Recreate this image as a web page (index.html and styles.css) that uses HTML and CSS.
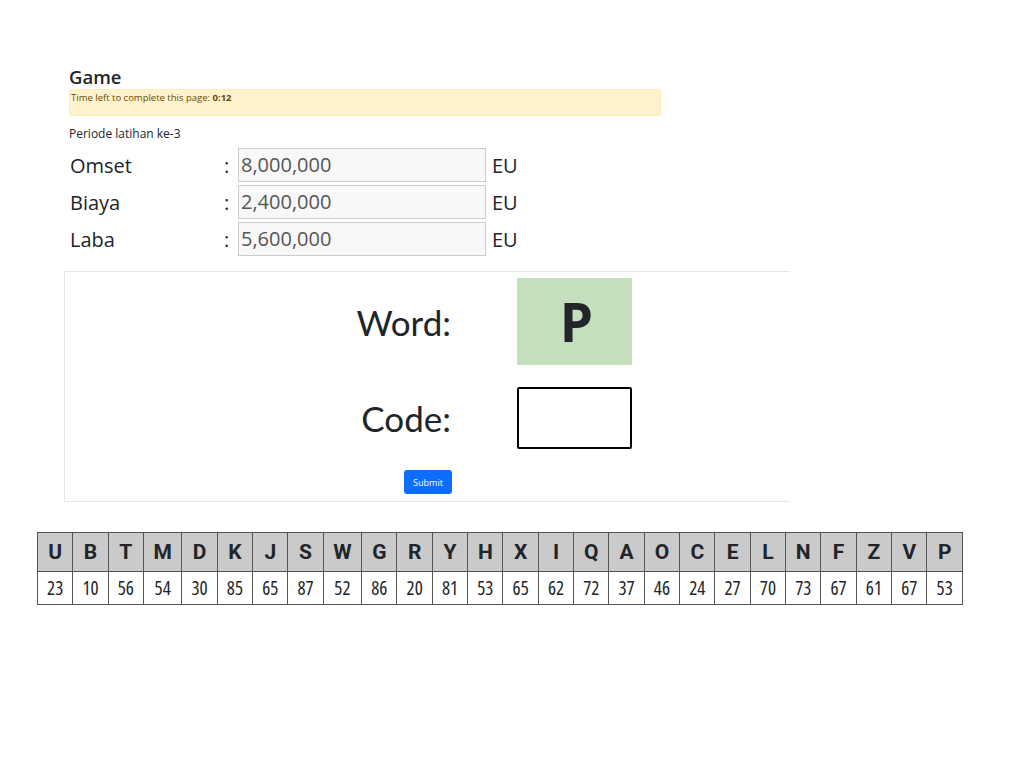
FILE: index.html
```html
<!DOCTYPE html>
<html>
<head>
<meta charset="utf-8">
<link rel="stylesheet" href="styles.css">
</head>
<body>
<div class="page">
  <div class="main">
    <h5 class="title">Game</h5>
    <div class="alert">Time left to complete this page: <b>0:12</b></div>
    <p class="periode">Periode latihan ke-3</p>
    <div class="fields">
      <div class="field"><span class="label">Omset</span><span class="colon">:</span><span class="value">8,000,000</span><span class="unit">EU</span></div>
      <div class="field"><span class="label">Biaya</span><span class="colon">:</span><span class="value">2,400,000</span><span class="unit">EU</span></div>
      <div class="field"><span class="label">Laba</span><span class="colon">:</span><span class="value">5,600,000</span><span class="unit">EU</span></div>
    </div>
    <div class="game">
      <div class="grid">
        <div class="glabel">Word:</div>
        <div class="word">P</div>
        <div class="glabel">Code:</div>
        <div class="code"></div>
      </div>
      <div class="actions"><button class="submit">Submit</button></div>
    </div>
  </div>
  <table class="key">
    <tr class="head">
      <th>U</th><th>B</th><th>T</th><th>M</th><th>D</th><th>K</th><th>J</th><th>S</th><th>W</th><th>G</th><th>R</th><th>Y</th><th>H</th><th>X</th><th>I</th><th>Q</th><th>A</th><th>O</th><th>C</th><th>E</th><th>L</th><th>N</th><th>F</th><th>Z</th><th>V</th><th>P</th>
    </tr>
    <tr class="body">
      <td>23</td><td>10</td><td>56</td><td>54</td><td>30</td><td>85</td><td>65</td><td>87</td><td>52</td><td>86</td><td>20</td><td>81</td><td>53</td><td>65</td><td>62</td><td>72</td><td>37</td><td>46</td><td>24</td><td>27</td><td>70</td><td>73</td><td>67</td><td>61</td><td>67</td><td>53</td>
    </tr>
  </table>
</div>
</body>
</html>
```
FILE: styles.css
```css
html, body {
  margin: 0;
  padding: 0;
  background: #fff;
}
body {
  font-family: "Open Sans", "Noto Sans", sans-serif;
  color: #212529;
}
.page {
  padding-top: 65px;
}
.main {
  margin-left: 64px;
  width: 725px;
}
.title {
  margin: 0 0 0 5px;
  font-size: 18.5px;
  font-weight: 600;
  line-height: 24px;
}
.alert {
  margin-left: 5px;
  width: 589px;
  height: 25px;
  background: #fff3cd;
  border: 1px solid #ffecb5;
  border-radius: 3px;
  color: #664d03;
  font-size: 9.5px;
  line-height: 16px;
  padding: 0 0 0 1px;
  box-sizing: content-box;
}
.alert b {
  font-weight: 700;
}
.periode {
  margin: 9px 0 0 5px;
  font-size: 12px;
  line-height: 18px;
  font-weight: 500;
}
.fields {
  margin-top: 5px;
  display: flex;
  flex-direction: column;
  gap: 3px;
}
.field {
  display: flex;
  align-items: center;
  height: 34px;
  font-size: 20px;
}
.label {
  margin-left: 6px;
  width: 154px;
}
.colon {
  width: 14px;
}
.value {
  width: 244px;
  height: 32px;
  border: 1px solid #cccccc;
  background: #f8f8f8;
  color: #555;
  line-height: 32px;
  padding-left: 2px;
}
.unit {
  margin-left: 6px;
}
.game {
  margin-top: 15px;
  border-top: 1px solid #e5e5e5;
  border-left: 1px solid #e5e5e5;
  border-bottom: 1px solid #e5e5e5;
  padding: 6px 0 6px 0;
  height: 217px;
}
.grid {
  display: grid;
  grid-template-columns: 180px 115px;
  column-gap: 66px;
  row-gap: 22px;
  padding-left: 206px;
  align-items: center;
}
.glabel {
  text-align: right;
  font-family: "Lato", "Open Sans", sans-serif;
  font-size: 35px;
  font-weight: 400;
}
.word {
  height: 87px;
  background: #c5dfbe;
  display: flex;
  align-items: center;
  justify-content: center;
  font-family: "Liberation Sans Narrow", "Open Sans", sans-serif;
  font-size: 53px;
  font-weight: 700;
  padding-left: 4px;
  box-sizing: border-box;
}
.code {
  height: 58px;
  border: 2px solid #000;
  border-radius: 2px;
}
.actions {
  display: flex;
  justify-content: center;
  margin-top: 21px;
  padding-left: 2px;
}
.submit {
  width: 48px;
  height: 24px;
  background: #0d6efd;
  border: 0;
  border-radius: 3px;
  color: #fff;
  font-family: "Open Sans", sans-serif;
  font-size: 9px;
  padding: 0;
}
.key {
  margin: 30px 0 0 37px;
  width: 926px;
  border-collapse: collapse;
}
.key th, .key td {
  border: 1px solid #555;
  text-align: center;
  padding: 0 4px;
}
.key th {
  background: #cacaca;
  height: 38px;
  font-family: "Roboto", "Open Sans", sans-serif;
  font-stretch: normal;
  font-size: 21px;
  font-weight: 700;
}
.key td {
  height: 32px;
  font-size: 19px;
  font-weight: 400;
  font-stretch: 75%;
}
```
